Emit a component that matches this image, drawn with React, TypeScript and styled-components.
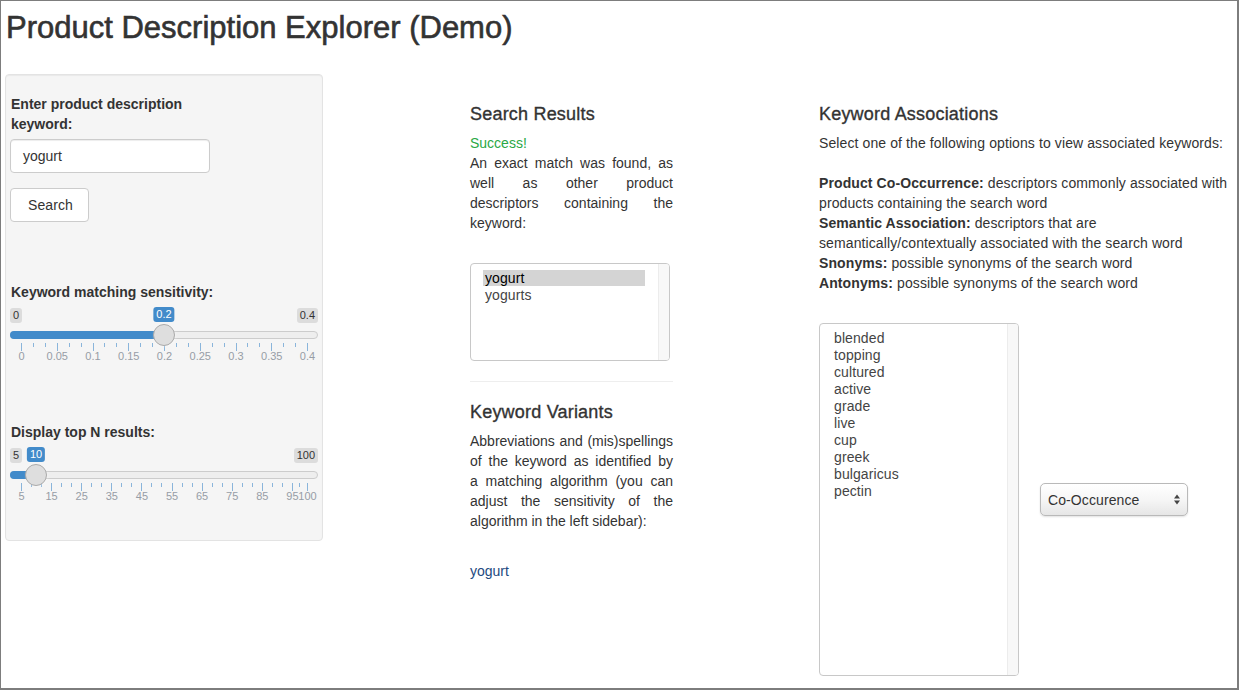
import React from 'react';
import styled, { createGlobalStyle } from 'styled-components';

const Global = createGlobalStyle`
  html, body { margin: 0; padding: 0; background: #fff; }
  body {
    font-family: "Liberation Sans", Arial, Helvetica, sans-serif;
    font-size: 14px;
    line-height: 20px;
    color: #333;
  }
  * { box-sizing: border-box; }
`;

const Frame = styled.div`
  width: 1239px;
  height: 690px;
  border: 1px solid #7d7d7d;
  border-right-width: 2px;
  border-bottom-width: 2px;
  padding-left: 4px;
  overflow: hidden;
`;

const Title = styled.h1`
  margin: 10px 0 0 1px;
  font-size: 31px;
  line-height: 33px;
  font-weight: 500;
  color: #333;
  -webkit-text-stroke: 0.6px #333;
`;

const Layout = styled.div`
  display: grid;
  grid-template-columns: 318px 350px 1fr;
  align-items: start;
  margin-top: 30px;
`;

const Well = styled.div`
  height: 467px;
  background: #f5f5f5;
  border: 1px solid #e3e3e3;
  border-radius: 4px;
  box-shadow: inset 0 1px 1px rgba(0, 0, 0, 0.05);
  padding: 19px 4px;
`;

const FormGroup = styled.div<{ $width?: number; $top?: number }>`
  width: ${(p) => (p.$width ? `${p.$width}px` : 'auto')};
  margin-top: ${(p) => p.$top ?? 0}px;
`;

const Label = styled.label`
  display: block;
  font-weight: 700;
  margin-bottom: 5px;
  padding-left: 1px;
`;

const TextInput = styled.div`
  height: 34px;
  width: 200px;
  border: 1px solid #ccc;
  border-radius: 4px;
  background: #fff;
  padding: 6px 12px;
  box-shadow: inset 0 1px 1px rgba(0, 0, 0, 0.075);
  color: #333;
`;

const Button = styled.div`
  display: flex;
  align-items: center;
  width: 79px;
  height: 34px;
  margin-top: 15px;
  padding: 0 17px;
  border: 1px solid #ccc;
  border-radius: 4px;
  background: #fff;
  color: #333;
  letter-spacing: 0.1px;
`;

/* ---------- slider ---------- */
const SliderBox = styled.div`
  position: relative;
  width: 308px;
  height: 63px;
`;
const Line = styled.div`
  position: absolute;
  left: 0;
  right: 0;
  top: 24px;
  height: 8px;
  background: #eee;
  border: 1px solid #ccc;
  border-radius: 8px;
`;
const Bar = styled.div`
  position: absolute;
  left: 0;
  top: 24px;
  height: 8px;
  background: #428bca;
  border-radius: 8px 0 0 8px;
`;
const Handle = styled.div`
  position: absolute;
  top: 17px;
  width: 22px;
  height: 22px;
  margin-left: -11px;
  border-radius: 50%;
  background: #dedede;
  border: 1px solid #aaa;
  box-shadow: 1px 1px 3px rgba(255, 255, 255, 0.3);
`;
const EdgeLabel = styled.span<{ $side: 'left' | 'right' }>`
  position: absolute;
  top: 1px;
  ${(p) => (p.$side === 'left' ? 'left: 0;' : 'right: 0;')}
  font-size: 11px;
  line-height: 13px;
  padding: 1px 3px;
  background: rgba(0, 0, 0, 0.1);
  border-radius: 3px;
  color: #333;
`;
const Single = styled.span`
  position: absolute;
  top: 0;
  transform: translateX(-50%);
  font-size: 11px;
  line-height: 13px;
  padding: 1px 3px;
  background: #428bca;
  color: #fff;
  border-radius: 3px;
`;
const Pol = styled.div<{ $major: boolean }>`
  position: absolute;
  top: 36px;
  width: 1px;
  height: ${(p) => (p.$major ? 8 : 4)}px;
  background: #428bca;
  opacity: 0.6;
`;
const GridText = styled.span`
  position: absolute;
  top: 43px;
  transform: translateX(-50%);
  font-size: 11px;
  line-height: 13px;
  color: #979da6;
  white-space: nowrap;
`;

type SliderProps = {
  min: number;
  max: number;
  value: number;
  majors: number[];
  minLabel: string;
  maxLabel: string;
  valueLabel: string;
  fmt: (v: number) => string;
};

const Slider: React.FC<SliderProps> = ({ min, max, value, majors, minLabel, maxLabel, valueLabel, fmt }) => {
  const pos = (v: number) => 11 + ((v - min) / (max - min)) * 286;
  const minors: number[] = [];
  for (let i = 1; i < majors.length; i++) {
    const a = majors[i - 1];
    const b = majors[i];
    const full = majors[1] - majors[0];
    const n = b - a < full * 0.99 ? 1 : 2;
    for (let z = 1; z <= n; z++) minors.push(a + ((b - a) * z) / (n + 1));
  }
  return (
    <SliderBox>
      <EdgeLabel $side="left">{minLabel}</EdgeLabel>
      <EdgeLabel $side="right">{maxLabel}</EdgeLabel>
      <Line />
      <Bar style={{ width: pos(value) }} />
      {minors.map((v, i) => (
        <Pol key={'m' + i} $major={false} style={{ left: pos(v) }} />
      ))}
      {majors.map((v, i) => (
        <Pol key={'M' + i} $major style={{ left: pos(v) }} />
      ))}
      {majors.map((v, i) => (
        <GridText key={'t' + i} style={{ left: pos(v) + 0.5 }}>
          {fmt(v)}
        </GridText>
      ))}
      <Single style={{ left: pos(value) }}>{valueLabel}</Single>
      <Handle style={{ left: pos(value) }} />
    </SliderBox>
  );
};

/* ---------- columns ---------- */
const Column = styled.div<{ $pad: number; $width?: number }>`
  padding-left: ${(p) => p.$pad}px;
  width: ${(p) => (p.$width ? `${p.$width + p.$pad}px` : 'auto')};
`;

const RightColumn = styled(Column)`
  letter-spacing: 0.1px;
`;

const Heading = styled.h4<{ $top?: number }>`
  margin: ${(p) => p.$top ?? 30}px 0 9px;
  font-size: 18px;
  line-height: 20px;
  font-weight: 500;
  letter-spacing: 0.2px;
  color: #333;
  -webkit-text-stroke: 0.35px #333;
`;

const Success = styled.div`
  color: #2aa845;
`;

const JustLine = styled.div<{ $last?: boolean }>`
  text-align: justify;
  text-align-last: ${(p) => (p.$last ? 'left' : 'justify')};
`;

const Plain = styled.p`
  margin: 0;
`;

const Strong = styled.b`
  font-weight: 700;
`;

const Rule = styled.hr`
  margin: 20px 0;
  border: 0;
  border-top: 1px solid #eee;
`;

const ListBox = styled.div<{ $h: number; $top?: number }>`
  display: flex;
  width: 200px;
  height: ${(p) => p.$h}px;
  margin-top: ${(p) => p.$top ?? 0}px;
  border: 1px solid #c8c8c8;
  border-radius: 4px;
  background: #fff;
  overflow: hidden;
  flex-shrink: 0;
`;

const Options = styled.div`
  flex: 1;
  padding: 6px 13px 6px 12px;
  font-size: 14px;
  line-height: 17px;
  letter-spacing: 0.1px;
`;

const Option = styled.div<{ $sel?: boolean }>`
  padding: 0 2px;
  height: 17px;
  color: ${(p) => (p.$sel ? '#000' : '#444')};
  background: ${(p) => (p.$sel ? '#d4d4d4' : 'transparent')};
  ${(p) => (p.$sel ? 'height: 16px; line-height: 16px; margin-bottom: 1px;' : '')}
`;

const Track = styled.div`
  width: 11px;
  background: #f8f8f8;
  border-left: 1px solid #ececec;
`;

const LinkText = styled.div`
  margin-top: 30px;
  color: #234a80;
`;

const AssocRow = styled.div`
  display: flex;
  align-items: center;
  gap: 21px;
  margin-top: 30px;
`;

const Dropdown = styled.div`
  display: flex;
  align-items: center;
  justify-content: space-between;
  width: 148px;
  height: 33px;
  padding: 0 6px 0 7px;
  border: 1px solid #b9b9b9;
  border-radius: 5px;
  background: linear-gradient(#ffffff 0%, #f6f6f6 50%, #e6e6e6 100%);
  box-shadow: 0 1px 2px rgba(0, 0, 0, 0.12);
  color: #333;
  font-size: 14px;
`;

const Arrows = () => (
  <svg width="8" height="13" viewBox="0 0 8 13">
    <path d="M4 1.5 L7 5.5 L1 5.5 Z" fill="#444" />
    <path d="M4 11.5 L7 7.5 L1 7.5 Z" fill="#444" />
  </svg>
);

const Blank = styled.div`
  height: 20px;
`;

const assoc = ['blended', 'topping', 'cultured', 'active', 'grade', 'live', 'cup', 'greek', 'bulgaricus', 'pectin'];

const resultLines = ['An exact match was found, as', 'well as other product', 'descriptors containing the', 'keyword:'];
const variantLines = [
  'Abbreviations and (mis)spellings',
  'of the keyword as identified by',
  'a matching algorithm (you can',
  'adjust the sensitivity of the',
  'algorithm in the left sidebar):',
];

export default function App() {
  return (
    <>
      <Global />
      <Frame>
        <Title>Product Description Explorer (Demo)</Title>
        <Layout>
          <Well>
            <FormGroup $width={200}>
              <Label>Enter product description keyword:</Label>
              <TextInput>yogurt</TextInput>
            </FormGroup>
            <Button>Search</Button>
            <FormGroup $top={60}>
              <Label>Keyword matching sensitivity:</Label>
              <Slider
                min={0}
                max={0.4}
                value={0.2}
                majors={[0, 0.05, 0.1, 0.15, 0.2, 0.25, 0.3, 0.35, 0.4]}
                minLabel="0"
                maxLabel="0.4"
                valueLabel="0.2"
                fmt={(v) => String(Math.round(v * 100) / 100)}
              />
            </FormGroup>
            <FormGroup $top={52}>
              <Label>Display top N results:</Label>
              <Slider
                min={5}
                max={100}
                value={10}
                majors={[5, 15, 25, 35, 45, 55, 65, 75, 85, 95, 100]}
                minLabel="5"
                maxLabel="100"
                valueLabel="10"
                fmt={(v) => String(v)}
              />
            </FormGroup>
          </Well>

          <Column $pad={147} $width={203}>
            <Heading>Search Results</Heading>
            <Success>Success!</Success>
            {resultLines.map((l, i) => (
              <JustLine key={l} $last={i === resultLines.length - 1}>
                {l}
              </JustLine>
            ))}
            <ListBox $h={98} $top={30}>
              <Options>
                <Option $sel>yogurt</Option>
                <Option>yogurts</Option>
              </Options>
              <Track />
            </ListBox>
            <Rule />
            <Heading $top={0}>Keyword Variants</Heading>
            {variantLines.map((l, i) => (
              <JustLine key={l} $last={i === variantLines.length - 1}>
                {l}
              </JustLine>
            ))}
            <LinkText>yogurt</LinkText>
          </Column>

          <RightColumn $pad={146}>
            <Heading>Keyword Associations</Heading>
            <Plain>Select one of the following options to view associated keywords:</Plain>
            <Blank />
            <Plain>
              <Strong>Product Co-Occurrence:</Strong> {'descriptors commonly associated with'}
              <br />
              {'products containing the search word'}
              <br />
              <Strong>Semantic Association:</Strong> {'descriptors that are'}
              <br />
              {'semantically/contextually associated with the search word'}
              <br />
              <Strong>Snonyms:</Strong> {'possible synonyms of the search word'}
              <br />
              <Strong>Antonyms:</Strong> {'possible synonyms of the search word'}
            </Plain>
            <AssocRow>
              <ListBox $h={353}>
                <Options>
                  {assoc.map((a) => (
                    <Option key={a}>{a}</Option>
                  ))}
                </Options>
                <Track />
              </ListBox>
              <Dropdown>
                <span>Co-Occurence</span>
                <Arrows />
              </Dropdown>
            </AssocRow>
          </RightColumn>
        </Layout>
      </Frame>
    </>
  );
}
